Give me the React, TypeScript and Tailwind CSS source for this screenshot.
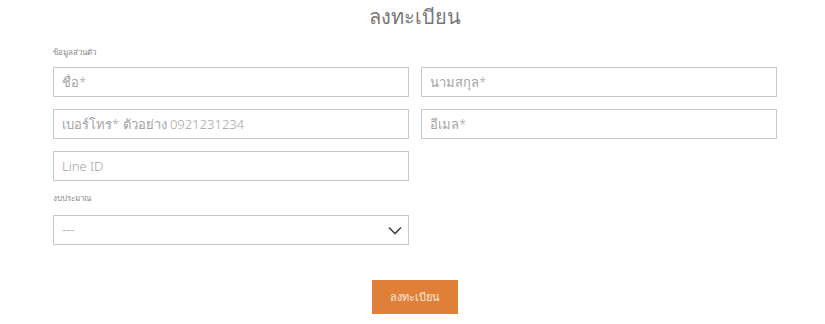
import React from "react";

export default function App() {
  const input =
    "h-[30px] w-full border border-[#c8c8c8] bg-white px-[8px] text-[13px] font-light text-[#a3a3a3] placeholder:text-[#a3a3a3] outline-none";
  return (
    <div className="min-h-[324px] w-full bg-white" style={{ fontFamily: '"Noto Sans", "Open Sans", sans-serif' }}>
      <div className="ml-[53px] w-[724px] pt-[4px]">
        <h1 className="text-center text-[20px] font-light leading-[26px] text-[#777]">ลงทะเบียน</h1>
        <div className="mt-[17px] text-[8px] font-light leading-[10px] text-[#888]">ข้อมูลส่วนตัว</div>
        <div className="mt-[10px] grid grid-cols-2 gap-x-[12px] gap-y-[12px]">
          <input className={input} placeholder="ชื่อ*" />
          <input className={input} placeholder="นามสกุล*" />
          <input className={input} placeholder="เบอร์โทร* ตัวอย่าง 0921231234" />
          <input className={input} placeholder="อีเมล*" />
          <input className={input} placeholder="Line ID" />
          <div />
        </div>
        <div className="mt-[12px] text-[8px] font-light leading-[10px] text-[#888]">งบประมาณ</div>
        <div className="mt-[12px] grid grid-cols-2 gap-x-[12px]">
          <div className="flex h-[30px] items-center justify-between border border-[#c8c8c8] bg-white pl-[8px] pr-[6px]">
            <span className="text-[13px] font-light text-[#a3a3a3]">---</span>
            <svg width="14" height="9" viewBox="0 0 14 9" fill="none">
              <path d="M1 1.5 L7 7.5 L13 1.5" stroke="#444" strokeWidth="1.6" />
            </svg>
          </div>
        </div>
        <div className="mt-[35px] flex justify-center">
          <button className="h-[34px] w-[86px] bg-[#e08038] text-[11px] font-light text-[#fce8d8]">ลงทะเบียน</button>
        </div>
      </div>
    </div>
  );
}
